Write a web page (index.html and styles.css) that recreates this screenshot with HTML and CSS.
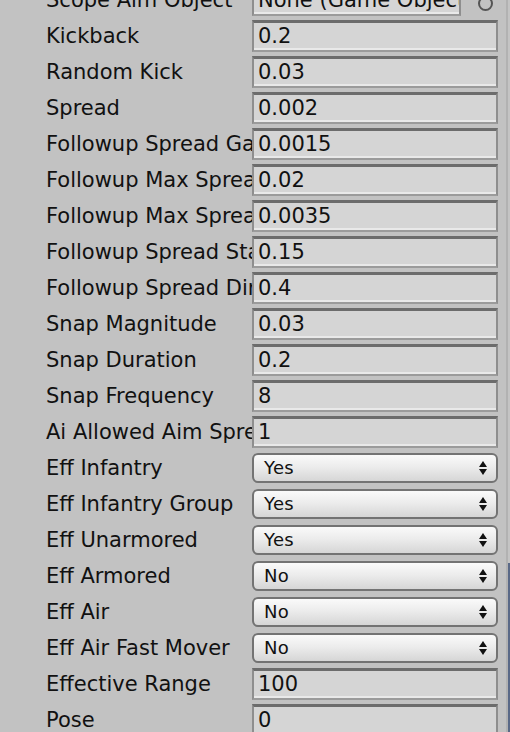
FILE: index.html
```html
<!DOCTYPE html>
<html>
<head>
<meta charset="utf-8">
<link rel="stylesheet" href="styles.css">
</head>
<body>
<div class="window">
  <div class="inspector">
    <div class="row">
      <div class="label"><span>Scope Aim Object</span></div>
      <div class="field object">None (Game Object)</div>
      <div class="picker"></div>
    </div>
    <div class="row"><div class="label"><span>Kickback</span></div><div class="field">0.2</div></div>
    <div class="row"><div class="label"><span>Random Kick</span></div><div class="field">0.03</div></div>
    <div class="row"><div class="label"><span>Spread</span></div><div class="field">0.002</div></div>
    <div class="row"><div class="label"><span>Followup Spread Gain</span></div><div class="field">0.0015</div></div>
    <div class="row"><div class="label"><span>Followup Max Spread Hip</span></div><div class="field">0.02</div></div>
    <div class="row"><div class="label"><span>Followup Max Spread Aim</span></div><div class="field">0.0035</div></div>
    <div class="row"><div class="label"><span>Followup Spread Stay Time</span></div><div class="field">0.15</div></div>
    <div class="row"><div class="label"><span>Followup Spread Diminish</span></div><div class="field">0.4</div></div>
    <div class="row"><div class="label"><span>Snap Magnitude</span></div><div class="field">0.03</div></div>
    <div class="row"><div class="label"><span>Snap Duration</span></div><div class="field">0.2</div></div>
    <div class="row"><div class="label"><span>Snap Frequency</span></div><div class="field">8</div></div>
    <div class="row"><div class="label"><span>Ai Allowed Aim Spread</span></div><div class="field">1</div></div>
    <div class="row"><div class="label"><span>Eff Infantry</span></div><div class="select">Yes<span class="arrows"></span></div></div>
    <div class="row"><div class="label"><span>Eff Infantry Group</span></div><div class="select">Yes<span class="arrows"></span></div></div>
    <div class="row"><div class="label"><span>Eff Unarmored</span></div><div class="select">Yes<span class="arrows"></span></div></div>
    <div class="row"><div class="label"><span>Eff Armored</span></div><div class="select">No<span class="arrows"></span></div></div>
    <div class="row"><div class="label"><span>Eff Air</span></div><div class="select">No<span class="arrows"></span></div></div>
    <div class="row"><div class="label"><span>Eff Air Fast Mover</span></div><div class="select">No<span class="arrows"></span></div></div>
    <div class="row"><div class="label"><span>Effective Range</span></div><div class="field">100</div></div>
    <div class="row"><div class="label"><span>Pose</span></div><div class="field">0</div></div>
  </div>
  <div class="scrollbar"><div class="thumb"></div></div>
</div>
</body>
</html>
```
FILE: styles.css
```css
html, body {
  margin: 0;
  padding: 0;
  height: 732px;
  overflow: hidden;
  background: #c2c2c2;
}
.window {
  display: flex;
  height: 732px;
}
.inspector {
  flex: 1;
  display: flex;
  flex-direction: column;
  margin-top: -18px;
  font-family: "DejaVu Sans", "Liberation Sans", sans-serif;
  color: #111;
}
.row {
  height: 36px;
  display: flex;
  align-items: center;
  flex-shrink: 0;
}
.label {
  width: 206px;
  padding-left: 46px;
  font-size: 21px;
  white-space: nowrap;
  overflow: hidden;
  line-height: 36px;
}
.field {
  box-sizing: border-box;
  width: 246px;
  height: 32px;
  background: #d5d5d5;
  border-top: 3px solid #6c6c6c;
  border-left: 2px solid #8e8e8e;
  border-right: 2px solid #8e8e8e;
  border-bottom: 2px solid #9b9b9b;
  box-shadow: inset 0 -2px 0 #e9e9e9;
  font-size: 21px;
  line-height: 26px;
  padding-left: 4px;
  white-space: nowrap;
  overflow: hidden;
}
.field.object {
  width: 209px;
}
.picker {
  width: 11px;
  height: 11px;
  border: 2px solid #555;
  border-radius: 50%;
  margin-left: 17px;
  margin-top: 6px;
}
.select {
  box-sizing: border-box;
  width: 246px;
  height: 30px;
  border: 2px solid #737373;
  border-radius: 6px;
  background: linear-gradient(#fafafa, #ececec 45%, #d6d6d6);
  font-size: 18px;
  line-height: 26px;
  letter-spacing: 0.3px;
  padding-left: 10px;
  display: flex;
  justify-content: space-between;
  align-items: center;
  padding-right: 9px;
}
.arrows {
  width: 8px;
  height: 16px;
  position: relative;
}
.arrows::before, .arrows::after {
  content: "";
  position: absolute;
  left: 0;
  border-left: 4px solid transparent;
  border-right: 4px solid transparent;
}
.arrows::before {
  top: 1px;
  border-bottom: 6px solid #111;
}
.arrows::after {
  bottom: 1px;
  border-top: 6px solid #111;
}
.scrollbar {
  width: 2px;
  border-left: 2px solid #b2b2b2;
  margin-left: 2px;
  background: #c4c4c4;
  display: flex;
  flex-direction: column;
}
.thumb {
  margin-top: 563px;
  flex: 1;
  background: #5a6987;
}
```
